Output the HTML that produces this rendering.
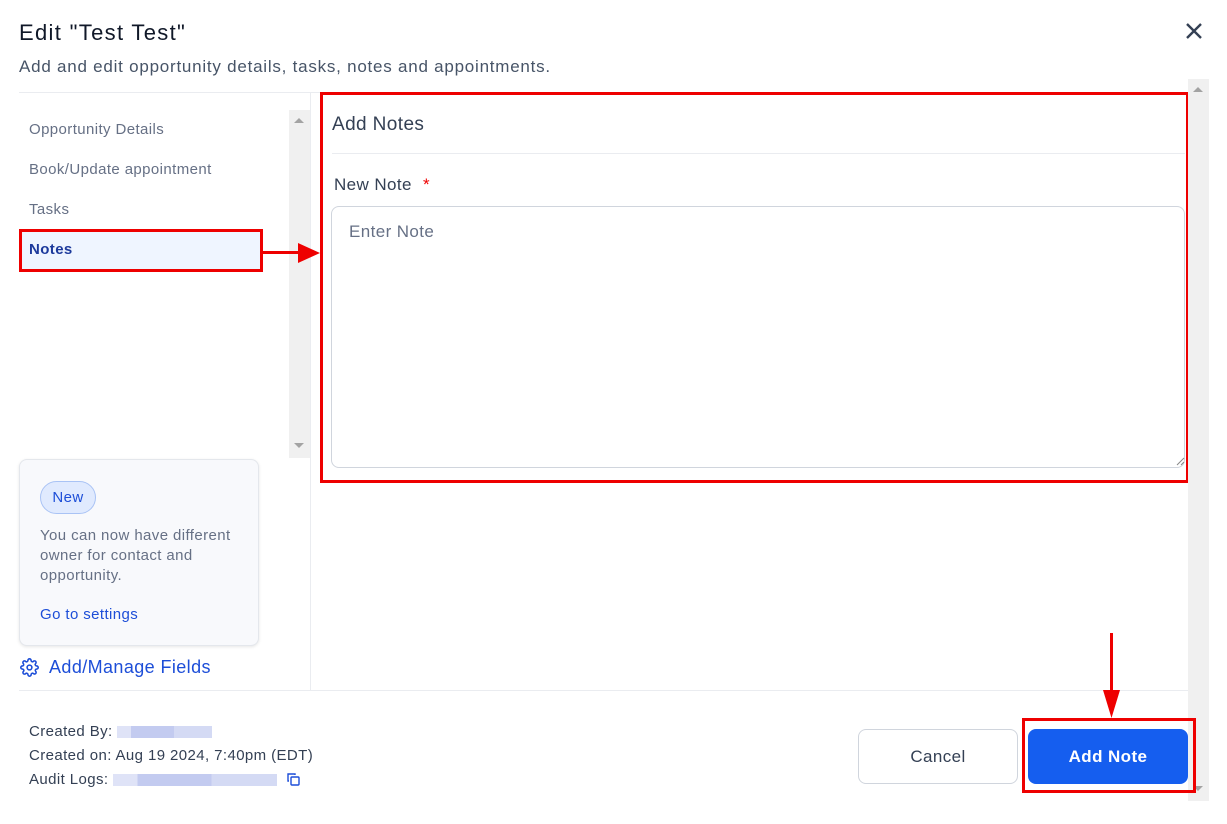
<!DOCTYPE html>
<html><head><meta charset="utf-8"><style>
*{box-sizing:border-box;margin:0;padding:0}
body{width:1227px;height:824px;background:#fff;font-family:"Liberation Sans",sans-serif;position:relative;overflow:hidden;color:#344054;letter-spacing:0.025em}
.a{position:absolute;white-space:nowrap}
.blur{display:inline-block;height:12px;background:linear-gradient(90deg,#dfe3f7 0 15%,#c3cbf0 15% 60%,#d4daf4 60% 100%);vertical-align:middle}
</style></head><body>
<div class="a" style="left:19px;top:20px;font-size:22px;color:#101828;letter-spacing:0.06em">Edit "Test Test"</div>
<div class="a" style="left:19px;top:57px;font-size:17px;color:#475467;letter-spacing:0.045em">Add and edit opportunity details, tasks, notes and appointments.</div>
<svg class="a" style="left:1185px;top:22px" width="18" height="18" viewBox="0 0 18 18"><path d="M2 2L16 16M16 2L2 16" stroke="#344054" stroke-width="2.4"/></svg>
<div class="a" style="left:19px;top:92px;width:1170px;height:1px;background:#eaecf0"></div>

<div class="a" style="left:289px;top:110px;width:21px;height:348px;background:#f0f0f0"></div>
<svg class="a" style="left:293px;top:116px" width="12" height="8"><path d="M1 7L6 2L11 7Z" fill="#a3a3a3"/></svg>
<svg class="a" style="left:293px;top:442px" width="12" height="8"><path d="M1 1L6 6L11 1Z" fill="#a3a3a3"/></svg>
<div class="a" style="left:310px;top:93px;width:1px;height:597px;background:#eaecf0"></div>

<div class="a" style="left:29px;top:121px;font-size:15px;color:#667085">Opportunity Details</div>
<div class="a" style="left:29px;top:161px;font-size:15px;color:#667085">Book/Update appointment</div>
<div class="a" style="left:29px;top:201px;font-size:15px;color:#667085">Tasks</div>
<div class="a" style="left:19px;top:229px;width:244px;height:43px;background:#eff5ff;border:3px solid #e00;"></div>
<div class="a" style="left:29px;top:241px;font-size:15px;color:#1d3a9c;font-weight:bold">Notes</div>
<div class="a" style="left:263px;top:251px;width:40px;height:3px;background:#e00"></div>
<svg class="a" style="left:298px;top:243px" width="22" height="20"><path d="M0 0L22 10L0 20Z" fill="#e00"/></svg>

<div class="a" style="left:19px;top:459px;width:240px;height:187px;background:#f8f9fc;border:1px solid #e4e7ec;border-radius:8px;box-shadow:0 1px 3px rgba(0,0,0,.1)"></div>
<div class="a" style="left:40px;top:481px;width:56px;height:33px;background:#e0eafe;border:1px solid #a9c3f5;border-radius:17px;font-size:15px;color:#1d4ed8;text-align:center;line-height:31px">New</div>
<div class="a" style="left:40px;top:526px;font-size:15px;line-height:20px;color:#667085;width:215px;white-space:normal">You can now have different owner for contact and opportunity.</div>
<div class="a" style="left:40px;top:606px;font-size:15px;color:#1d4ed8">Go to settings</div>
<svg class="a" style="left:20px;top:658px" width="19" height="19" viewBox="0 0 24 24" fill="none" stroke="#1d4ed8" stroke-width="2"><circle cx="12" cy="12" r="3"/><path d="M19.4 15a1.65 1.65 0 0 0 .33 1.820l.06.06a2 2 0 1 1-2.830 2.830l-.06-.06a1.65 1.65 0 0 0-1.820-.33 1.65 1.65 0 0 0-1 1.510V21a2 2 0 1 1-4 0v-.09A1.65 1.65 0 0 0 9 19.4a1.65 1.65 0 0 0-1.820.33l-.06.06a2 2 0 1 1-2.830-2.830l.06-.06A1.65 1.65 0 0 0 4.680 15a1.65 1.65 0 0 0-1.510-1H3a2 2 0 1 1 0-4h.09A1.65 1.65 0 0 0 4.600 9a1.65 1.65 0 0 0-.33-1.820l-.06-.06a2 2 0 1 1 2.830-2.830l.06.06A1.650 1.650 0 0 0 9 4.680 1.650 1.650 0 0 0 10 3.170V3a2 2 0 1 1 4 0v.09a1.650 1.650 0 0 0 1 1.510 1.650 1.650 0 0 0 1.820-.33l.06-.06a2 2 0 1 1 2.830 2.830l-.06.06A1.650 1.650 0 0 0 19.4 9a1.650 1.650 0 0 0 1.510 1H21a2 2 0 1 1 0 4h-.09a1.650 1.650 0 0 0-1.510 1z"/></svg>
<div class="a" style="left:49px;top:657px;font-size:18px;color:#1d4ed8">Add/Manage Fields</div>

<div class="a" style="left:331px;top:206px;width:854px;height:262px;border:1px solid #d0d5dd;border-radius:8px"></div>
<div class="a" style="left:320px;top:92px;width:869px;height:391px;border:3px solid #e00"></div>
<div class="a" style="left:332px;top:114px;font-size:19px;color:#344054">Add Notes</div>
<div class="a" style="left:332px;top:153px;width:853px;height:1px;background:#eaecf0"></div>
<div class="a" style="left:334px;top:175px;font-size:17px;color:#344054">New Note <span style="color:#e00;margin-left:6px">*</span></div>
<div class="a" style="left:349px;top:222px;font-size:17px;color:#667085">Enter Note</div>
<svg class="a" style="left:1175px;top:456px" width="10" height="10"><path d="M9 2L2 9M9 6L6 9" stroke="#888" stroke-width="1"/></svg>

<div class="a" style="left:1188px;top:79px;width:21px;height:722px;background:#f0f0f0"></div>
<svg class="a" style="left:1192px;top:85px" width="12" height="8"><path d="M1 7L6 2L11 7Z" fill="#a3a3a3"/></svg>
<svg class="a" style="left:1192px;top:785px" width="12" height="8"><path d="M1 1L6 6L11 1Z" fill="#a3a3a3"/></svg>

<div class="a" style="left:19px;top:690px;width:1169px;height:1px;background:#eaecf0"></div>
<div class="a" style="left:29px;top:723px;font-size:15px;color:#344054">Created By: <span class="blur" style="width:95px"></span></div>
<div class="a" style="left:29px;top:747px;font-size:15px;color:#344054">Created on: Aug 19 2024, 7:40pm (EDT)</div>
<div class="a" style="left:29px;top:771px;font-size:15px;color:#344054">Audit Logs: <span class="blur" style="width:164px"></span></div>
<svg class="a" style="left:286px;top:772px" width="15" height="15" viewBox="0 0 15 15" fill="none" stroke="#1d4ed8" stroke-width="1.4"><rect x="5" y="5" width="8" height="8" rx="1"/><path d="M3 9H2V2h7v1"/></svg>

<div class="a" style="left:858px;top:729px;width:160px;height:55px;border:1px solid #d0d5dd;border-radius:8px;font-size:17px;color:#344054;text-align:center;line-height:53px">Cancel</div>
<div class="a" style="left:1022px;top:718px;width:174px;height:75px;border:3px solid #e00"></div>
<div class="a" style="left:1028px;top:729px;width:160px;height:55px;background:#155eef;border-radius:8px;font-size:17px;color:#fff;font-weight:bold;text-align:center;line-height:55px">Add Note</div>
<div class="a" style="left:1110px;top:633px;width:3px;height:60px;background:#e00"></div>
<svg class="a" style="left:1103px;top:690px" width="17" height="28"><path d="M0 0H17L8.5 28Z" fill="#e00"/></svg>
</body></html>
